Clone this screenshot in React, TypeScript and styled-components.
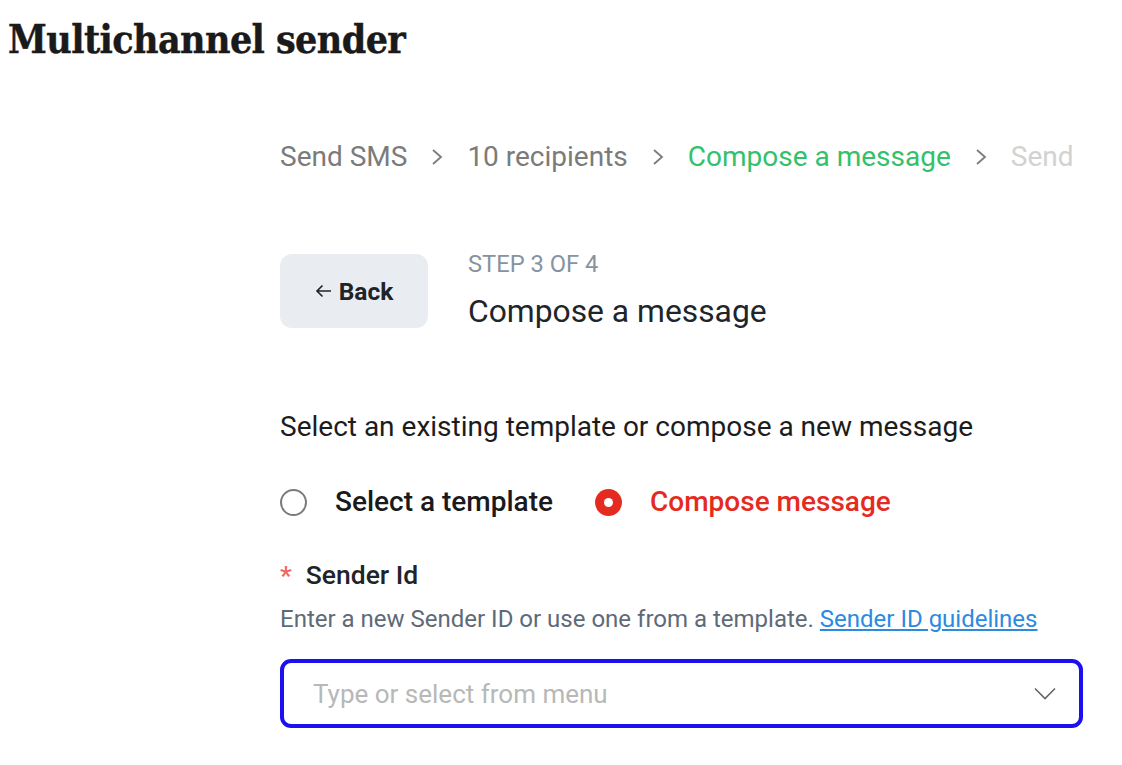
import React from "react";
import styled, { createGlobalStyle } from "styled-components";

const Global = createGlobalStyle`
  body { margin: 8px; background: #fff; font-family: Roboto, "Liberation Sans", sans-serif; }
  * { box-sizing: border-box; }
`;

const Page = styled.div`
  display: flex;
  flex-direction: column;
`;

const Title = styled.h1`
  margin: 9px 0 0 0;
  font-family: "DejaVu Serif Condensed", "DejaVu Serif", serif;
  font-weight: 700;
  font-size: 39px;
  letter-spacing: -0.6px;
  line-height: 44px;
  color: #1a1a1a;
  -webkit-text-stroke: 0.4px #1a1a1a;
`;

const Content = styled.div`
  margin-left: 272px;
  width: 802px;
  display: flex;
  flex-direction: column;
`;

const Crumbs = styled.nav`
  margin-top: 78px;
  display: flex;
  align-items: center;
  gap: 23px;
  font-size: 28px;
  line-height: 36px;
`;

const Crumb = styled.span<{ $state: "done" | "active" | "todo" }>`
  color: ${(p) => (p.$state === "active" ? "#33c16c" : p.$state === "todo" ? "#d2d2d2" : "#7b7b7b")};
`;

const Sep = styled.svg`
  width: 14px;
  height: 20px;
  flex: none;
`;

const StepRow = styled.div`
  margin-top: 72px;
  display: flex;
  align-items: flex-start;
  gap: 40px;
`;

const BackButton = styled.button`
  width: 148px;
  height: 74px;
  margin-top: 7px;
  border: none;
  border-radius: 12px;
  background: #e9ecf0;
  color: #1f2429;
  font-family: Roboto, sans-serif;
  font-weight: 700;
  font-size: 24.5px;
  display: flex;
  align-items: center;
  justify-content: center;
  gap: 7px;
`;

const StepText = styled.div`
  padding-top: 3px;
  display: flex;
  flex-direction: column;
`;

const StepLabel = styled.div`
  font-size: 23.7px;
  line-height: 28px;
  color: #8793a0;
`;

const StepTitle = styled.div`
  margin-top: 14px;
  font-size: 31.8px;
  line-height: 38px;
  color: #20252a;
`;

const Intro = styled.p`
  margin: 79px 0 0 0;
  font-size: 28px;
  line-height: 36px;
  color: #1c1c1c;
`;

const RadioRow = styled.div`
  margin-top: 39px;
  display: flex;
  align-items: center;
  gap: 42px;
`;

const RadioOption = styled.label<{ $checked?: boolean }>`
  display: flex;
  align-items: center;
  gap: 28px;
  font-size: 28px;
  line-height: 36px;
  font-weight: 500;
  color: ${(p) => (p.$checked ? "#e52b1f" : "#1a1a1a")};
`;

const RadioDot = styled.span<{ $checked?: boolean }>`
  width: 27px;
  height: 27px;
  border-radius: 50%;
  flex: none;
  ${(p) =>
    p.$checked
      ? `background: #e52b1f; display:flex; align-items:center; justify-content:center;
         &::after { content: ""; width: 9px; height: 9px; border-radius: 50%; background: #fff; }`
      : `border: 2px solid #7a7a7a; background: #fff;`}
`;

const FieldLabel = styled.div`
  margin-top: 38px;
  display: flex;
  align-items: center;
  gap: 14px;
  font-size: 26.5px;
  line-height: 34px;
  font-weight: 500;
  color: #1f2429;
`;

const Required = styled.span`
  color: #f26464;
  font-weight: 500;
`;

const Help = styled.p`
  margin: 12px 0 0 0;
  font-size: 24px;
  line-height: 30px;
  color: #5e6a78;
`;

const HelpLink = styled.a`
  color: #2a8be0;
  text-decoration: underline;
`;

const Select = styled.div`
  margin-top: 25px;
  width: 803px;
  height: 69px;
  border: 4px solid #1a10f0;
  border-radius: 11px;
  display: flex;
  align-items: center;
  justify-content: space-between;
  padding: 0 23px 0 29px;
`;

const Placeholder = styled.span`
  font-size: 26px;
  color: #b8b8b8;
`;

const ChevronSvg = styled.svg`
  width: 22px;
  height: 13px;
  flex: none;
`;

const Chevron = () => (
  <ChevronSvg viewBox="0 0 22 13" aria-hidden>
    <path d="M1 1.5 L11 11.5 L21 1.5" fill="none" stroke="#666" strokeWidth="1.6" />
  </ChevronSvg>
);

const Arrow = () => (
  <Sep viewBox="0 0 14 20" aria-hidden>
    <path d="M3 3 L11 10 L3 17" fill="none" stroke="#7b7b7b" strokeWidth="1.8" />
  </Sep>
);

export default function App() {
  return (
    <Page>
      <Global />
      <Title>Multichannel sender</Title>
      <Content>
        <Crumbs>
          <Crumb $state="done">Send SMS</Crumb>
          <Arrow />
          <Crumb $state="done">10 recipients</Crumb>
          <Arrow />
          <Crumb $state="active">Compose a message</Crumb>
          <Arrow />
          <Crumb $state="todo">Send</Crumb>
        </Crumbs>
        <StepRow>
          <BackButton>
            <svg width="17" height="14" viewBox="0 0 17 14">
              <path d="M16 7 H2 M7.5 1.5 L2 7 L7.5 12.5" fill="none" stroke="#1f2429" strokeWidth="1.6" />
            </svg>
            Back
          </BackButton>
          <StepText>
            <StepLabel>STEP 3 OF 4</StepLabel>
            <StepTitle>Compose a message</StepTitle>
          </StepText>
        </StepRow>
        <Intro>Select an existing template or compose a new message</Intro>
        <RadioRow>
          <RadioOption>
            <RadioDot />
            Select a template
          </RadioOption>
          <RadioOption $checked>
            <RadioDot $checked />
            Compose message
          </RadioOption>
        </RadioRow>
        <FieldLabel>
          <Required>*</Required>
          Sender Id
        </FieldLabel>
        <Help>
          Enter a new Sender ID or use one from a template. <HelpLink href="#">Sender ID guidelines</HelpLink>
        </Help>
        <Select>
          <Placeholder>Type or select from menu</Placeholder>
          <Chevron />
        </Select>
      </Content>
    </Page>
  );
}
